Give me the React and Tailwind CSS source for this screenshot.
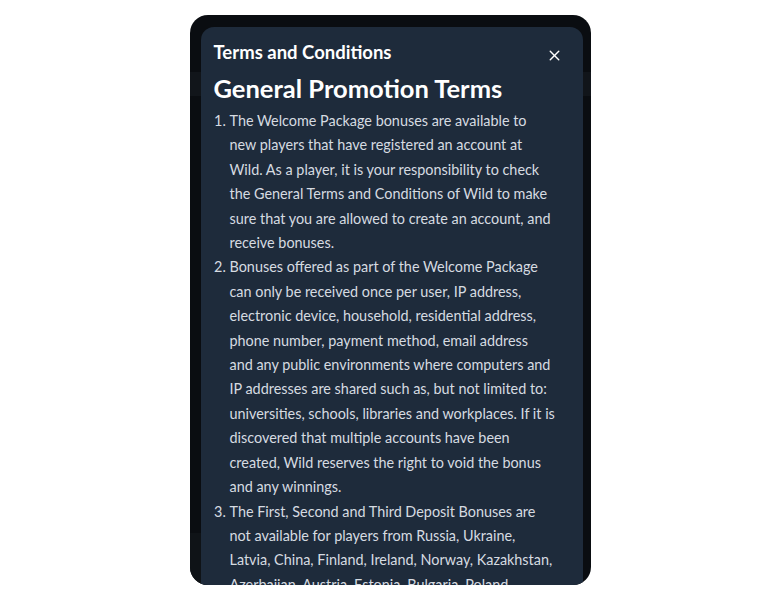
import { X } from "lucide-react";

const terms = [
  "The Welcome Package bonuses are available to new players that have registered an account at Wild. As a player, it is your responsibility to check the General Terms and Conditions of Wild to make sure that you are allowed to create an account, and receive bonuses.",
  "Bonuses offered as part of the Welcome Package can only be received once per user, IP address, electronic device, household, residential address, phone number, payment method, email address and any public environments where computers and IP addresses are shared such as, but not limited to: universities, schools, libraries and workplaces. If it is discovered that multiple accounts have been created, Wild reserves the right to void the bonus and any winnings.",
  "The First, Second and Third Deposit Bonuses are not available for players from Russia, Ukraine, Latvia, China, Finland, Ireland, Norway, Kazakhstan, Azerbaijan, Austria, Estonia, Bulgaria, Poland, Slovakia, Hungary, Georgia and Belarus.",
];

export default function App() {
  return (
    <div className="min-h-screen w-full bg-white flex justify-center pt-[15px]" style={{ fontFamily: 'Lato, "Noto Sans", sans-serif' }}>
      <div className="relative w-[401px] h-[570px] rounded-[18px] bg-[#0a0d11] overflow-hidden pt-3 pl-[11px] pr-2">
        {/* page behind the overlay */}
        <div className="absolute left-0 top-[57px] w-full h-[24px] bg-[#11151a]" />
        <div className="absolute left-0 bottom-0 w-[60px] h-[52px] rounded-tr-[20px] bg-[#0f1317]" />

        <div className="relative h-full rounded-t-[13px] bg-[#1e2b3b] px-[13px] pt-[13px] overflow-hidden">
          <div className="flex items-center justify-between">
            <h2 className="text-[18.5px] font-bold text-white leading-[24px]">Terms and Conditions</h2>
            <button className="text-white mr-[7px] mt-[6px]">
              <X size={17} strokeWidth={2} />
            </button>
          </div>
          <h1 className="mt-[8px] text-[25.5px] font-bold text-white leading-[32px]">General Promotion Terms</h1>
          <ol className="mt-[5px] list-decimal pl-4 pr-[14.6px] text-[14.4px] leading-[24.4px] text-[#d6dbe1]">
            {terms.map((t) => (
              <li key={t.slice(0, 12)}>{t}</li>
            ))}
          </ol>
        </div>
      </div>
    </div>
  );
}
